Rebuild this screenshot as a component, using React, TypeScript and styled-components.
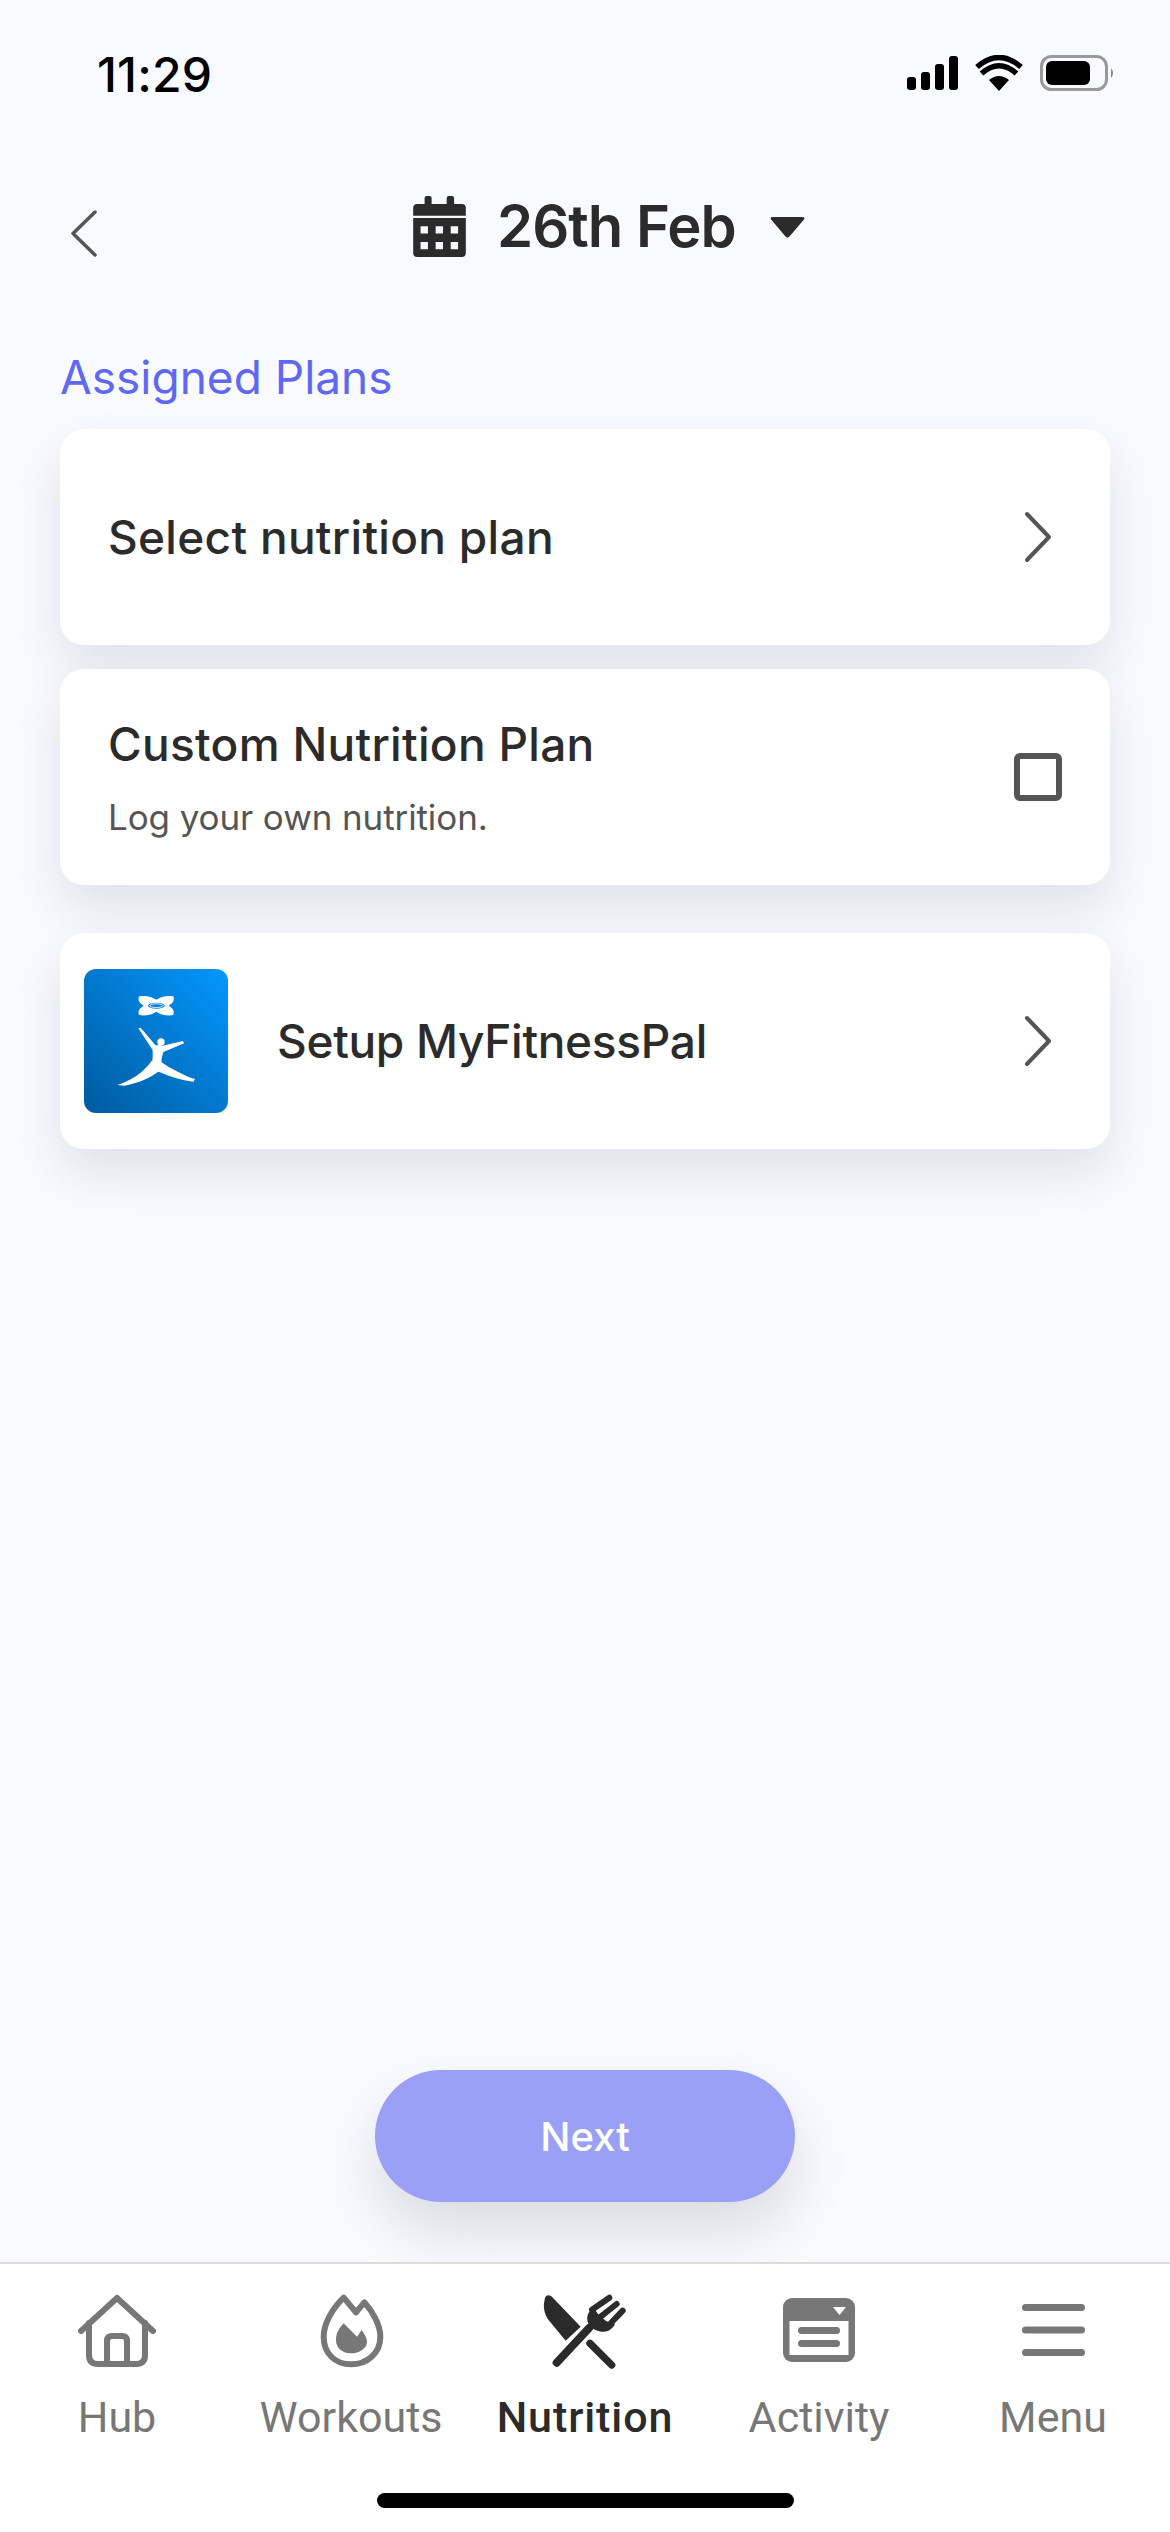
import styled, { createGlobalStyle } from "styled-components";

const GlobalStyle = createGlobalStyle`
    html, body {
        margin: 0;
        padding: 0;
        background: #f9faff;
    }
`;

const Screen = styled.div`
    display: flex;
    flex-direction: column;
    width: 1170px;
    height: 2532px;
    overflow: hidden;
    background: #f9faff;
    font-family: Inter, "Liberation Sans", sans-serif;
    color: #2b2b2b;
`;

const StatusBar = styled.div`
    display: flex;
    align-items: center;
    justify-content: space-between;
    height: 148px;
    box-sizing: border-box;
    padding: 0 55px 0 97px;
    margin-bottom: 48px;
`;
const Clock = styled.span`
    font-size: 48px;
    font-weight: 500;
    color: #000;
    letter-spacing: 0.2px;
`;
const StatusIcons = styled.svg`
    display: block;
`;

const Header = styled.div`
    display: flex;
    align-items: center;
    height: 61px;
    padding-left: 71px;
`;
const BackIcon = styled.svg`
    align-self: flex-end;
`;
const DateButton = styled.div`
    display: flex;
    align-items: center;
    margin-left: 316px;
`;
const DateText = styled.span`
    margin-left: 31px;
    font-size: 58px;
    font-weight: 600;
    letter-spacing: -1px;
    line-height: 61px;
`;
const Caret = styled.svg`
    margin-left: 34px;
    margin-top: 2px;
`;

const Main = styled.main`
    flex: 1;
    display: flex;
    flex-direction: column;
    padding: 0 60px;
`;
const SectionLabel = styled.h2`
    margin: 92px 0 24px;
    font-size: 46px;
    font-weight: 400;
    line-height: 56px;
    color: #5f68f2;
`;
const Card = styled.div<{ $gap?: number }>`
    display: flex;
    align-items: center;
    height: 216px;
    flex-shrink: 0;
    box-sizing: border-box;
    margin-bottom: ${(p) => p.$gap ?? 24}px;
    padding: 0 48px;
    border-radius: 24px;
    background: #fff;
    box-shadow: 0 24px 50px rgba(20, 40, 60, 0.11);
`;
const LogoCard = styled(Card)`
    padding-left: 24px;
`;
const CardBody = styled.div`
    flex: 1;
`;
const CardTitle = styled.div`
    font-size: 46px;
    font-weight: 500;
    line-height: 56px;
    letter-spacing: 0.3px;
`;
const CardSub = styled.div`
    margin-top: 24px;
    font-size: 35px;
    line-height: 42px;
    letter-spacing: -0.1px;
    color: #555;
`;
const LogoTitle = styled(CardTitle)`
    flex: 1;
    margin-left: 49px;
    letter-spacing: -0.3px;
`;
const Logo = styled.svg`
    border-radius: 12px;
`;
const Chevron = styled.svg`
    margin-right: 10px;
`;
const Checkbox = styled.div`
    width: 48px;
    height: 48px;
    box-sizing: border-box;
    border: 6px solid #555;
    border-radius: 6px;
`;

const Footer = styled.div`
    margin-top: auto;
    display: flex;
    justify-content: center;
    padding-bottom: 60px;
`;
const NextButton = styled.button`
    width: 420px;
    height: 132px;
    border: none;
    border-radius: 66px;
    background: #9aa0f5;
    color: #fff;
    font-family: inherit;
    font-size: 40px;
    font-weight: 500;
    box-shadow: 0 30px 60px rgba(0, 0, 0, 0.12);
`;

const TabBar = styled.nav`
    position: relative;
    display: grid;
    grid-template-columns: repeat(5, 1fr);
    height: 270px;
    box-sizing: border-box;
    border-top: 2px solid #dcdcdc;
    background: #fff;
    z-index: 1;
`;
const Tab = styled.div<{ $active?: boolean }>`
    display: flex;
    flex-direction: column;
    align-items: center;
    padding-top: 21px;
    color: ${(p) => (p.$active ? "#2b2b2b" : "#777")};
`;
const TabIcon = styled.div`
    display: flex;
    align-items: center;
    justify-content: center;
    height: 90px;
`;
const TabLabel = styled.span<{ $active?: boolean }>`
    margin-top: 17px;
    font-family: Roboto, "Liberation Sans", sans-serif;
    font-size: 43px;
    line-height: 50px;
    font-weight: ${(p) => (p.$active ? 500 : 400)};
    letter-spacing: ${(p) => (p.$active ? "0.9px" : "0")};
`;
const HomeIndicator = styled.div`
    position: absolute;
    left: 377px;
    top: 229px;
    width: 417px;
    height: 15px;
    border-radius: 8px;
    background: #000;
`;

const ChevronRight = () => (
    <Chevron width="30" height="52" viewBox="0 0 30 52" fill="none">
        <path d="M5 3 L27 26 L5 49" stroke="#555" strokeWidth="4" strokeLinecap="round" strokeLinejoin="round" />
    </Chevron>
);

const tabs = [
    {
        label: "Hub",
        icon: (
            <svg width="90" height="84" viewBox="0 0 90 84" fill="none" stroke="currentColor" strokeWidth="6" strokeLinecap="round" strokeLinejoin="round">
                <path d="M9 43 L45 10 L81 43" />
                <path d="M17 35 V67 Q17 76 26 76 H64 Q73 76 73 67 V35" />
                <path d="M35 76 V53 Q35 48 40 48 H50 Q55 48 55 53 V76" />
            </svg>
        ),
    },
    {
        label: "Workouts",
        icon: (
            <svg width="100" height="90" viewBox="0 0 300 270" fill="none">
                <path d="M128 38 L165 82 L190 52 C215 80 238 120 238 155 C238 205 198 238 150 238 C102 238 68 205 68 155 C68 115 95 70 128 38 Z" stroke="currentColor" strokeWidth="18" strokeLinejoin="round" />
                <path d="M128 115 L168 155 L182 135 C193 150 198 160 198 170 C198 190 175 205 150 205 C125 205 105 190 105 165 C105 145 115 128 128 115 Z" fill="currentColor" />
            </svg>
        ),
    },
    {
        label: "Nutrition",
        active: true,
        icon: (
            <svg width="110" height="90" viewBox="0 0 330 270" fill="none">
                <path d="M45 38 C52 26 62 30 70 40 L152 125 L107 167 L60 110 C45 95 40 70 42 55 Z" fill="currentColor" />
                <path d="M180 175 L245 240" stroke="currentColor" strokeWidth="22" strokeLinecap="round" />
                <path d="M80 233 L178 128" stroke="currentColor" strokeWidth="24" strokeLinecap="round" />
                <path d="M172 105 C170 88 178 78 190 68 L205 88 L228 108 L255 118 C245 135 232 142 215 140 C195 138 174 125 172 105 Z" fill="currentColor" />
                <path d="M186 74 L238 38 M213 94 L260 57 M240 117 L278 77" stroke="currentColor" strokeWidth="18" strokeLinecap="round" />
            </svg>
        ),
    },
    {
        label: "Activity",
        icon: (
            <svg width="72" height="64" viewBox="0 0 72 64">
                <rect width="72" height="64" rx="9" fill="currentColor" />
                <rect x="6.5" y="23" width="59" height="34" fill="#fff" />
                <rect x="15" y="29" width="42" height="7" rx="3.5" fill="currentColor" />
                <rect x="15" y="42" width="42" height="7" rx="3.5" fill="currentColor" />
                <path d="M50 9 H63 L56.5 17 Z" fill="#fff" />
            </svg>
        ),
    },
    {
        label: "Menu",
        icon: (
            <svg width="63" height="53" viewBox="0 0 63 53" fill="currentColor">
                <rect width="63" height="7" y="0" rx="3.5" />
                <rect width="63" height="7" y="22.5" rx="3.5" />
                <rect width="63" height="7" y="45" rx="3.5" />
            </svg>
        ),
    },
];

export default function App() {
    return (
        <Screen>
            <GlobalStyle />
            <StatusBar>
                <Clock>11:29</Clock>
                <StatusIcons width="208" height="38" viewBox="0 0 208 38">
                    <g fill="#000">
                        <rect x="0" y="22" width="9" height="13" rx="3" />
                        <rect x="14" y="17" width="9" height="18" rx="3" />
                        <rect x="28" y="9" width="9" height="26" rx="3" />
                        <rect x="42" y="1" width="9" height="34" rx="3" />
                        <path d="M92 36 L82 25 Q92 17 102 25 Z" />
                    </g>
                    <path d="M74.5 18.5 Q92 3 109.5 18.5 M70 12 Q92 -7 114 12" stroke="#000" strokeWidth="5.5" fill="none" />
                    <rect x="134.5" y="1.5" width="65" height="33" rx="10" fill="none" stroke="#999" strokeWidth="3" />
                    <rect x="139" y="6" width="44" height="24" rx="6" fill="#000" />
                    <path d="M204 13 Q208 18 204 23 Z" fill="#888" />
                </StatusIcons>
            </StatusBar>

            <Header>
                <BackIcon width="26" height="47" viewBox="0 0 26 47" fill="none">
                    <path d="M24 2 L2 23.5 L24 45" stroke="#555" strokeWidth="3.5" strokeLinecap="round" strokeLinejoin="round" />
                </BackIcon>
                <DateButton>
                    <svg width="53" height="61" viewBox="40 48 157 182" fill="#2b2b2b">
                        <rect x="74" y="48" width="21" height="40" rx="6" />
                        <rect x="140" y="48" width="22" height="40" rx="6" />
                        <path d="M40 107 V84 Q40 72 52 72 H185 Q197 72 197 84 V107 Z" />
                        <path fillRule="evenodd" d="M40 114 H197 V218 Q197 230 185 230 H52 Q40 230 40 218 Z M62 138 V160 H84 V138 Z M107 138 V160 H129 V138 Z M152 138 V160 H174 V138 Z M62 185 V207 H84 V185 Z M107 185 V207 H129 V185 Z M152 185 V207 H174 V185 Z" />
                    </svg>
                    <DateText>26th Feb</DateText>
                    <Caret width="35" height="21" viewBox="0 0 35 21">
                        <path d="M3 0 H32 Q36 0 33.5 3 L19.5 19.5 Q17.5 21.5 15.5 19.5 L1.5 3 Q-1 0 3 0 Z" fill="#2b2b2b" />
                    </Caret>
                </DateButton>
            </Header>

            <Main>
                <SectionLabel>Assigned Plans</SectionLabel>
                <Card>
                    <CardBody>
                        <CardTitle>Select nutrition plan</CardTitle>
                    </CardBody>
                    <ChevronRight />
                </Card>
                <Card $gap={48}>
                    <CardBody>
                        <CardTitle>Custom Nutrition Plan</CardTitle>
                        <CardSub>Log your own nutrition.</CardSub>
                    </CardBody>
                    <Checkbox />
                </Card>
                <LogoCard>
                    <Logo width="144" height="144" viewBox="0 0 432 432">
                        <defs>
                            <linearGradient id="mfp" x1="0" y1="1" x2="1" y2="0">
                                <stop offset="0" stopColor="#005a9e" />
                                <stop offset="1" stopColor="#0497ff" />
                            </linearGradient>
                        </defs>
                        <rect width="432" height="432" fill="url(#mfp)" />
                        <path d="M165 82 C185 78 205 84 217 92 C229 84 249 78 268 82 C273 96 264 104 254 110 C264 116 273 124 268 138 C249 142 229 136 217 128 C205 136 185 142 165 138 C160 124 169 116 179 110 C169 104 160 96 165 82 Z" fill="#fff" />
                        <ellipse cx="217" cy="110" rx="25" ry="9" fill="#0a80dc" />
                        <ellipse cx="217" cy="110" rx="20" ry="5.5" fill="none" stroke="#fff" strokeWidth="2.5" />
                        <g fill="#fff">
                            <circle cx="231" cy="219" r="11" />
                            <path d="M163 178 L170 176 L216 230 L204 240 Z" />
                            <path d="M236 230 L297 216 L300 223 L240 248 Z" />
                            <path d="M204 235 C215 225 235 225 243 238 C236 255 230 270 234 286 L203 292 C206 270 208 250 204 235 Z" />
                            <path d="M203 275 C180 310 140 335 100 348 L122 350 C165 342 205 325 232 300 Z" />
                            <path d="M225 275 C260 298 300 320 333 330 L328 338 C290 334 245 320 208 300 Z" />
                        </g>
                    </Logo>
                    <LogoTitle>Setup MyFitnessPal</LogoTitle>
                    <ChevronRight />
                </LogoCard>
                <Footer>
                    <NextButton>Next</NextButton>
                </Footer>
            </Main>

            <TabBar>
                {tabs.map((t) => (
                    <Tab key={t.label} $active={t.active}>
                        <TabIcon>{t.icon}</TabIcon>
                        <TabLabel $active={t.active}>{t.label}</TabLabel>
                    </Tab>
                ))}
                <HomeIndicator />
            </TabBar>
        </Screen>
    );
}
